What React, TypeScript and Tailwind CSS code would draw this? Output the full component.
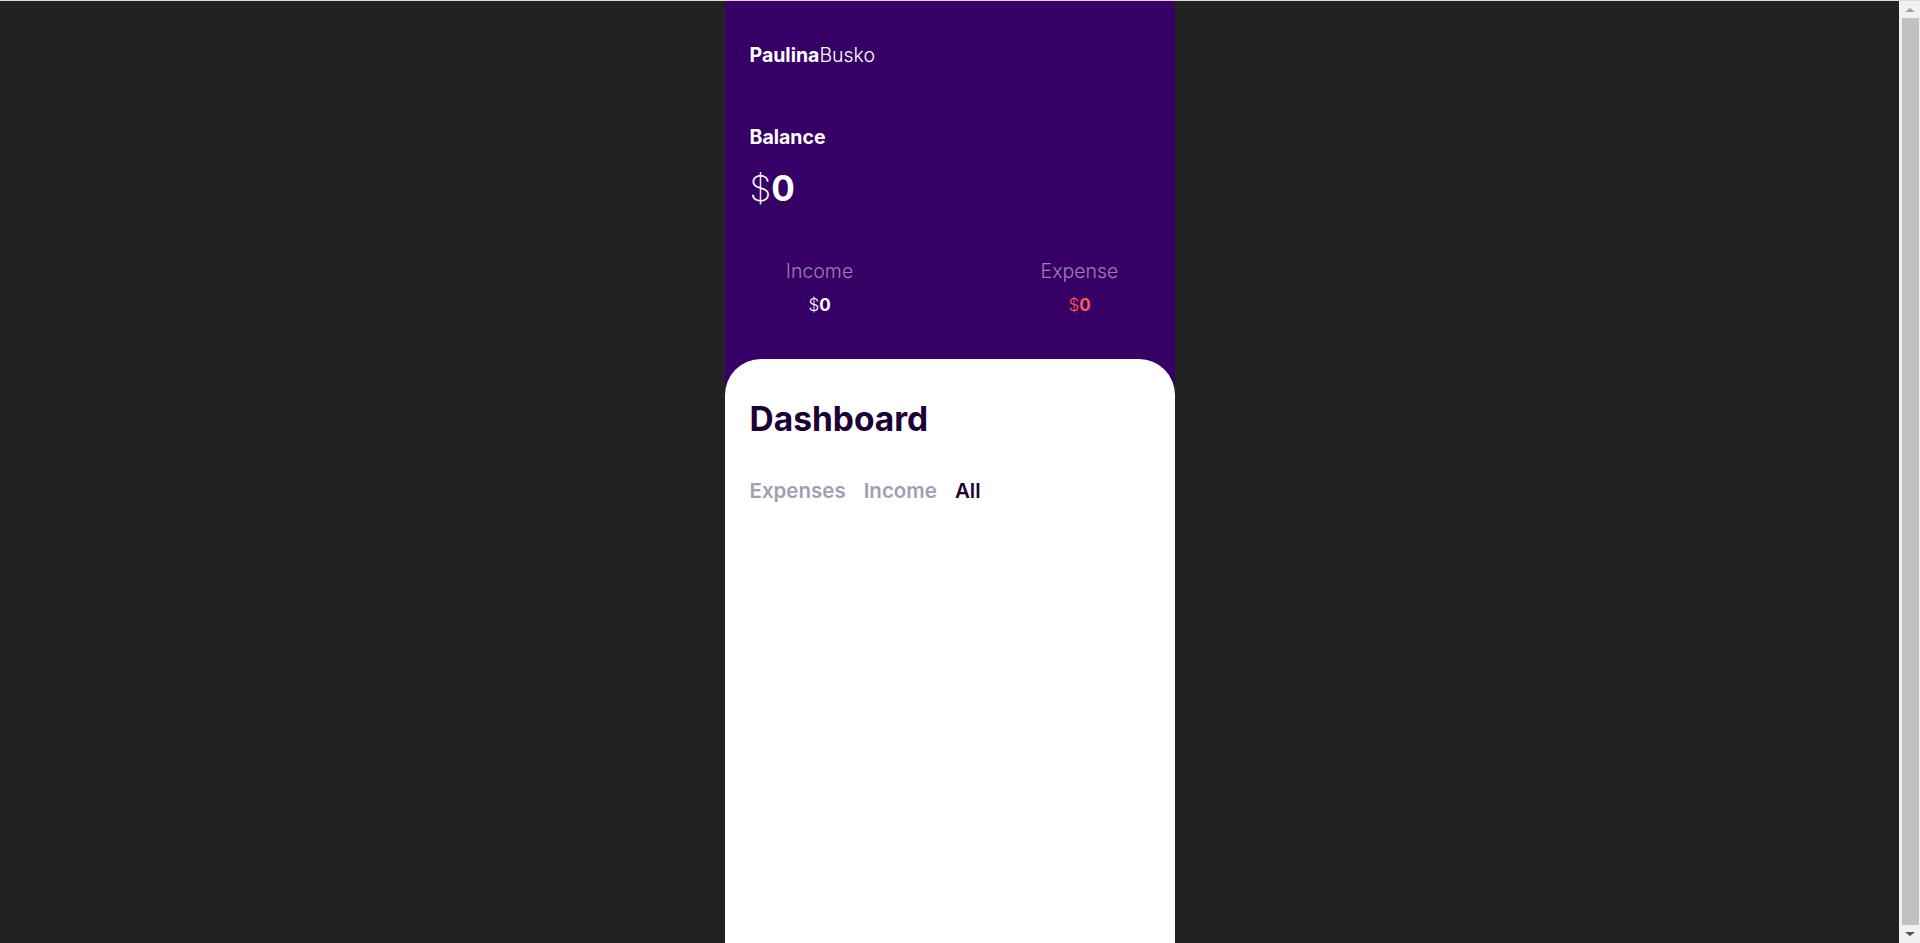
import React from "react";

function Scrollbar() {
  return (
    <div className="flex h-full w-[21px] shrink-0 flex-col items-center bg-[#f1f1f1]">
      <div className="flex h-[17px] w-full items-center justify-center">
        <div className="h-0 w-0 border-x-[5px] border-b-[4px] border-x-transparent border-b-[#a3a3a3]" />
      </div>
      <div className="ml-[2px] w-[17px] flex-1 bg-[#c1c1c1]" />
      <div className="flex h-[18px] w-full items-center justify-center">
        <div className="h-0 w-0 border-x-[5px] border-t-[4px] border-x-transparent border-t-[#505050]" />
      </div>
    </div>
  );
}

export default function App() {
  const font = { fontFamily: "Inter, 'Liberation Sans', sans-serif" } as React.CSSProperties;
  return (
    <div className="flex h-[943px] flex-col overflow-hidden bg-[#222222]" style={font}>
      <div className="h-px shrink-0 bg-[#dcdcdc]" />
      <div className="flex min-h-0 flex-1">
        <div className="min-w-0 flex-1 overflow-hidden">
          <div className="mx-auto w-[450px] bg-[#360066]">
            <header className="px-[25px] pt-[45px]">
              <div className="text-[19.5px] leading-none text-white">
                <span className="font-bold">Paulina</span>
                <span className="font-light">Busko</span>
              </div>
            </header>
            <section className="px-[25px] pt-[62px]">
              <div className="text-[19.5px] leading-none font-bold text-white">Balance</div>
              <div className="mt-[24px] text-[35px] leading-none text-white">
                <span className="font-extralight">$</span>
                <span className="font-bold">0</span>
              </div>
            </section>
            <section className="flex justify-between px-[25px] pt-[56px] pb-[45px]">
              <div className="flex w-[140px] flex-col items-center">
                <div className="text-[19.5px] leading-none font-light text-white/50">Income</div>
                <div className="mt-[15px] text-[17px] leading-none text-white">
                  <span className="font-light">$</span>
                  <span className="font-bold">0</span>
                </div>
              </div>
              <div className="flex w-[140px] flex-col items-center">
                <div className="text-[19.5px] leading-none font-light text-white/50">Expense</div>
                <div className="mt-[15px] text-[17px] leading-none text-[#ff5a4f]">
                  <span className="font-light">$</span>
                  <span className="font-bold">0</span>
                </div>
              </div>
            </section>
            <main className="min-h-[620px] rounded-t-[36px] bg-white px-[25px] pt-[44px]">
              <h1 className="text-[33.5px] leading-none font-bold text-[#1c0035]">Dashboard</h1>
              <nav className="mt-[45px] flex gap-[18px] text-[20.5px] leading-none font-semibold">
                <button className="text-[#a69db3]">Expenses</button>
                <button className="text-[#a69db3]">Income</button>
                <button className="text-[#1c0035]">All</button>
              </nav>
            </main>
          </div>
        </div>
        <Scrollbar />
      </div>
    </div>
  );
}
